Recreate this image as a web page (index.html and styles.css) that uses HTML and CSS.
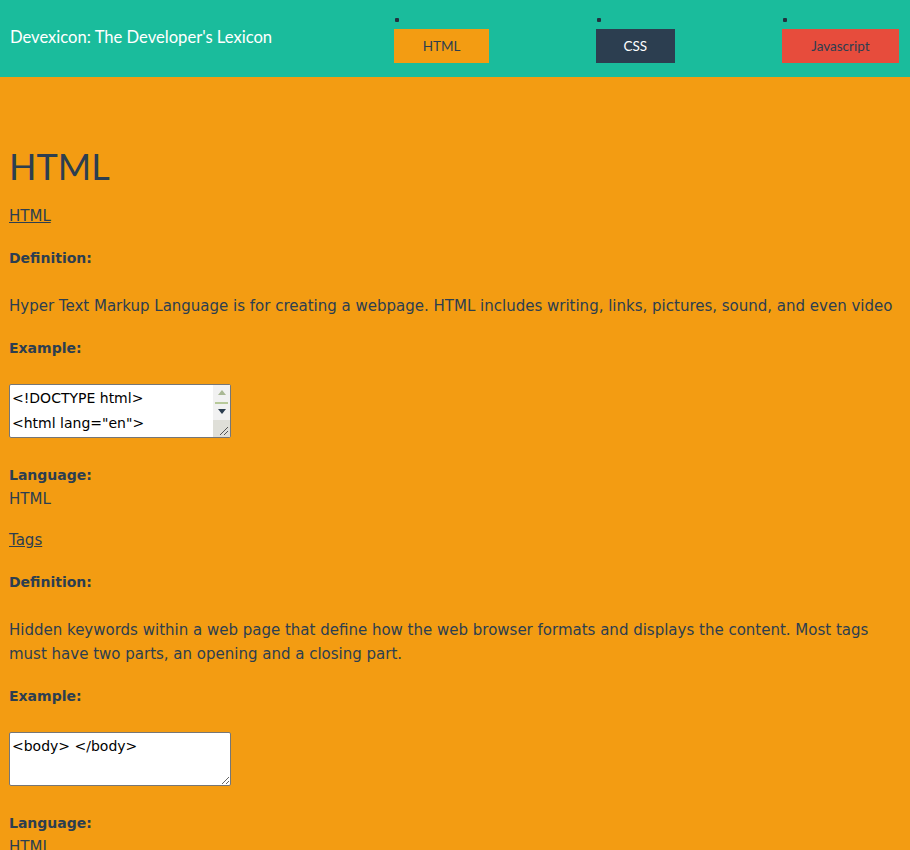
FILE: index.html
```html
<!DOCTYPE html>
<html lang="en">
<head>
<meta charset="utf-8">
<title>Devexicon</title>
<link rel="stylesheet" href="styles.css">
</head>
<body>
<header class="site-header">
  <h1 class="brand">Devexicon: The Developer's Lexicon</h1>
  <nav class="site-nav">
    <ul class="nav-list">
      <li class="nav-item"><a class="nav-link nav-html" href="#html">HTML</a></li>
      <li class="nav-item"><a class="nav-link nav-css" href="#css">CSS</a></li>
      <li class="nav-item"><a class="nav-link nav-js" href="#js">Javascript</a></li>
    </ul>
  </nav>
</header>
<main class="content">
  <h2 class="section-title" id="html">HTML</h2>
  <article class="term">
    <p class="term-name"><a href="#">HTML</a></p>
    <h4 class="label">Definition:</h4>
    <p class="definition">Hyper Text Markup Language is for creating a webpage. HTML includes writing, links, pictures, sound, and even video</p>
    <h4 class="label">Example:</h4>
    <div class="example-wrap">
      <textarea class="example" readonly>&lt;!DOCTYPE html&gt;
&lt;html lang="en"&gt;
&lt;head&gt;
  &lt;meta charset="utf-8"&gt;
  &lt;title&gt;Page&lt;/title&gt;
&lt;/head&gt;
&lt;body&gt;
&lt;/body&gt;
&lt;/html&gt;</textarea>
      <div class="scrollbar" aria-hidden="true">
        <div class="sb-btn sb-up"><svg width="8" height="5" viewBox="0 0 8 5"><path d="M0 5 L4 0 L8 5 Z" fill="#a9b894"/></svg></div>
        <div class="sb-track"><div class="sb-thumb"></div></div>
        <div class="sb-btn sb-down"><svg width="8" height="5" viewBox="0 0 8 5"><path d="M0 0 L8 0 L4 5 Z" fill="#2c3e50"/></svg></div>
        <div class="sb-corner"><svg width="17" height="17" viewBox="0 0 17 17"><path d="M15 7 L7 15 M15 11 L11 15" stroke="#555" stroke-width="1"/></svg></div>
      </div>
    </div>
    <h4 class="label lang-label">Language:</h4>
    <p class="language">HTML</p>
  </article>
  <article class="term">
    <p class="term-name"><a href="#">Tags</a></p>
    <h4 class="label">Definition:</h4>
    <p class="definition">Hidden keywords within a web page that define how the web browser formats and displays the content. Most tags must have two parts, an opening and a closing part.</p>
    <h4 class="label">Example:</h4>
    <div class="example-wrap">
      <textarea class="example" readonly>&lt;body&gt; &lt;/body&gt;</textarea>
    </div>
    <h4 class="label lang-label">Language:</h4>
    <p class="language">HTML</p>
  </article>
</main>
</body>
</html>
```
FILE: styles.css
```css
html, body {
  margin: 0;
  padding: 0;
}
body {
  background: #f39c12;
  color: #2c3e50;
  font-family: "DejaVu Sans", sans-serif;
  font-size: 15px;
  line-height: 24px;
}
.site-header {
  background: #1abc9c;
  height: 77px;
  display: flex;
  justify-content: space-between;
  align-items: flex-start;
}
.brand {
  margin: 0;
  padding: 26px 0 0 10px;
  font-family: Lato, sans-serif;
  font-weight: 400;
  font-size: 16.6px;
  line-height: 22px;
  color: #fff;
}
.site-nav {
  padding: 18px 11px 0 0;
}
.nav-list {
  list-style: none;
  margin: 0;
  padding: 0;
  display: flex;
  gap: 106.5px;
}
.nav-item::before {
  content: "";
  display: block;
  width: 4px;
  height: 4px;
  border-radius: 1px;
  background: #22313f;
  margin: 0 0 7px 1px;
}
.nav-link {
  display: block;
  font-family: Lato, sans-serif;
  font-size: 13.5px;
  line-height: 16px;
  padding: 9px 29px;
  text-decoration: none;
  color: #2c3e50;
}
.nav-html { background: #f39c12; padding: 9px 28.5px; }
.nav-css { background: #2c3e50; color: #fff; padding: 9px 28px; }
.nav-js { background: #e74c3c; padding: 9px 29.5px; }

.content {
  padding: 0 9px;
}
.section-title {
  margin: 67px 0 0;
  font-family: Lato, sans-serif;
  font-weight: 400;
  font-size: 36px;
  line-height: 44px;
  color: #2c3e50;
}
.term-name {
  margin: 16px 0 18px;
}
.term-name a {
  color: #2c3e50;
}
.label {
  margin: 0 0 24px;
  font-size: 14px;
  font-weight: 700;
}
.definition {
  margin: 0 0 18px;
}
.example-wrap {
  position: relative;
  width: 222px;
  height: 54px;
  margin: 0 0 25px;
}
.example {
  display: block;
  box-sizing: border-box;
  width: 222px;
  height: 54px;
  margin: 0;
  padding: 1px 2px;
  border: 1px solid #767676;
  border-radius: 2px;
  font-family: "DejaVu Sans", sans-serif;
  font-size: 14px;
  line-height: 25px;
  color: #000;
  background: #fff;
  overflow: hidden;
}
.scrollbar {
  position: absolute;
  top: 1px;
  right: 1px;
  bottom: 1px;
  width: 17px;
  background: #f1f1f1;
  display: flex;
  flex-direction: column;
}
.sb-btn {
  display: flex;
  align-items: center;
  justify-content: center;
}
.sb-btn svg {
  display: block;
}
.sb-up {
  height: 14px;
}
.sb-track {
  height: 6px;
  padding: 3px 2px 0;
  box-sizing: border-box;
}
.sb-thumb {
  height: 2px;
  background: #b7c99a;
}
.sb-down {
  height: 12px;
}
.sb-corner {
  margin-top: auto;
  height: 17px;
  background: #dfdfd8;
}
.sb-corner svg {
  display: block;
}
.lang-label {
  margin: 0;
}
.language {
  margin: 0 0 17px;
}
.term + .term .term-name {
  margin-top: 0;
}
```
